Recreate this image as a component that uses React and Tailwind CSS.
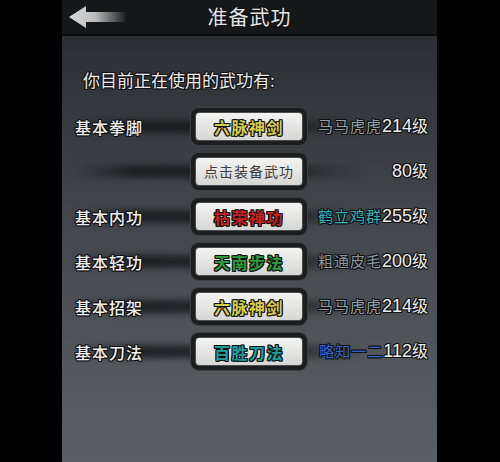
import React from "react";

const skills = [
  { slot: "基本拳脚", name: "六脉神剑", nameColor: "text-[#d4cc4c]", rank: "马马虎虎", rankColor: "text-[#93a3a4]", level: "214级" },
  { slot: "", name: "点击装备武功", empty: true, rank: "", rankColor: "", level: "80级" },
  { slot: "基本内功", name: "枯荣禅功", nameColor: "text-[#c42222]", rank: "鹤立鸡群", rankColor: "text-[#35b3b6]", level: "255级" },
  { slot: "基本轻功", name: "天南步法", nameColor: "text-[#2f9c3c]", rank: "粗通皮毛", rankColor: "text-[#8898a0]", level: "200级" },
  { slot: "基本招架", name: "六脉神剑", nameColor: "text-[#d4cc4c]", rank: "马马虎虎", rankColor: "text-[#93a3a4]", level: "214级" },
  { slot: "基本刀法", name: "百胜刀法", nameColor: "text-[#1f9e9c]", rank: "略知一二", rankColor: "text-[#2b66d6]", level: "112级" },
];

const cjk = "font-['Noto_Sans_CJK_SC',sans-serif]";
const outline =
  "[text-shadow:-1px_0_#111,1px_0_#111,0_-1px_#111,0_1px_#111,1px_1px_#111,-1px_-1px_#111,1px_-1px_#111,-1px_1px_#111]";

function BackArrow() {
  return (
    <svg width="58" height="24" viewBox="0 0 58 24">
      <defs>
        <linearGradient id="shaft" x1="0" y1="0" x2="1" y2="0">
          <stop offset="0" stopColor="#d8d8d8" />
          <stop offset="0.45" stopColor="#bdbdbd" />
          <stop offset="1" stopColor="#bdbdbd" stopOpacity="0" />
        </linearGradient>
      </defs>
      <path d="M0 12 L17 1 L17 7 L58 7 L58 17 L17 17 L17 23 Z" fill="url(#shaft)" />
    </svg>
  );
}

function SkillButton({ name, color, empty }) {
  return (
    <div className="w-[116px] h-[37px] rounded-[8px] bg-[#1c1d1f] p-[4px] shadow-[0_0_0_1px_#3d4043]">
      <div className="h-full rounded-[4px] border border-[#4a4c4e] bg-[linear-gradient(#f3f3f1,#d6d6d4)] flex items-center justify-center">
        {empty ? (
          <span className={`${cjk} text-[14px] text-[#3c3c3c] tracking-[1px]`}>{name}</span>
        ) : (
          <span className={`${cjk} text-[16px] font-bold tracking-[1.5px] ${color} ${outline}`}>{name}</span>
        )}
      </div>
    </div>
  );
}

export default function App() {
  return (
    <div className="w-[500px] h-[462px] bg-black overflow-hidden">
      <div className="ml-[62px] w-[375px] h-full flex flex-col">
        <div className="h-[36px] shrink-0 bg-[#161719] border-b-2 border-[#0a0a0b] grid grid-cols-[1fr_auto_1fr] items-center">
          <div className="pl-[7px] flex items-center">
            <BackArrow />
          </div>
          <div className={`${cjk} text-[20px] text-[#e6e6e6] tracking-[1px] ${outline}`}>准备武功</div>
          <div />
        </div>

        <div className="flex-1 bg-[linear-gradient(#2b2f33,#3f4347_35%,#51565b_75%,#5a5f64)] pt-[32px]">
          <div className={`pl-[21px] ${cjk} text-[17px] leading-[24px] text-[#ececec] ${outline}`}>
            你目前正在使用的武功有:
          </div>

          <div className="mt-[12px] flex flex-col">
            {skills.map((s, i) => (
              <div key={i} className="relative h-[45px] flex items-center">
                <div className="absolute left-[10px] right-[70px] top-[16px] h-[13px] rounded-full bg-[linear-gradient(to_right,transparent,rgba(20,22,24,0.8)_22%,rgba(20,22,24,0.7)_70%,transparent)] blur-[3px]" />
                <div className={`relative w-[129px] pl-[13px] ${cjk} text-[16px] font-medium text-[#efefef] tracking-[1px] ${outline}`}>
                  {s.slot}
                </div>
                <div className="relative">
                  <SkillButton name={s.name} color={s.nameColor} empty={s.empty} />
                </div>
                <div className={`relative flex-1 pr-[9px] text-right whitespace-nowrap ${outline}`}>
                  <span className={`${cjk} text-[15px] tracking-[1px] ${s.rankColor}`}>{s.rank}</span>
                  <span className="font-['Liberation_Sans',sans-serif] text-[18px] text-[#eeeeee]">
                    {s.level.replace("级", "")}
                  </span>
                  <span className={`${cjk} text-[16px] text-[#eeeeee]`}>级</span>
                </div>
              </div>
            ))}
          </div>
        </div>
      </div>
    </div>
  );
}
